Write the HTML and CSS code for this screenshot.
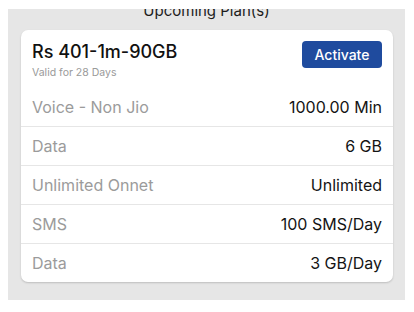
FILE: index.html
```html
<!DOCTYPE html>
<html>
<head>
<meta charset="utf-8">
<link rel="stylesheet" href="styles.css">
</head>
<body>
<div class="panel">
  <h2 class="panel-title">Upcoming Plan(s)</h2>
  <div class="card">
    <div class="card-head">
      <div class="plan">
        <div class="plan-name">Rs 401-1m-90GB</div>
        <div class="plan-valid">Valid for 28 Days</div>
      </div>
      <button class="btn">Activate</button>
    </div>
    <div class="row"><span class="label">Voice - Non Jio</span><span class="value">1000.00 Min</span></div>
    <div class="row"><span class="label">Data</span><span class="value">6 GB</span></div>
    <div class="row"><span class="label">Unlimited Onnet</span><span class="value">Unlimited</span></div>
    <div class="row"><span class="label">SMS</span><span class="value">100 SMS/Day</span></div>
    <div class="row"><span class="label">Data</span><span class="value">3 GB/Day</span></div>
  </div>
</div>
</body>
</html>
```

FILE: styles.css
```css
html, body {
  margin: 0;
  padding: 0;
  background: #ffffff;
  font-family: Inter, "Liberation Sans", Arial, sans-serif;
}
.panel {
  margin: 9px 9px 0 8px;
  height: 291px;
  background: #e6e6e6;
  overflow: hidden;
}
.panel-title {
  margin: -7px 0 10px 0;
  font-size: 15px;
  line-height: 18px;
  font-weight: 400;
  color: #1c1c1c;
  text-align: center;
}
.card {
  margin: 0 12px 0 13px;
  background: #ffffff;
  border-radius: 7px;
  box-shadow: 0 1px 2px rgba(0, 0, 0, 0.18);
  overflow: hidden;
}
.card-head {
  display: flex;
  justify-content: space-between;
  align-items: flex-start;
  padding: 11px 11px 8px 11px;
}
.plan-name {
  font-size: 18px;
  line-height: 22px;
  font-weight: 500;
  color: #111;
}
.plan-valid {
  margin-top: 3px;
  font-size: 10.5px;
  line-height: 13px;
  color: #9a9a9a;
}
.btn {
  margin-top: 0;
  width: 80px;
  height: 27px;
  border: none;
  border-radius: 4px;
  background: #1f4b9e;
  color: #ffffff;
  font-family: inherit;
  font-size: 14px;
  font-weight: 500;
  padding: 0;
}
.row {
  display: flex;
  justify-content: space-between;
  align-items: center;
  height: 39px;
  padding: 0 11px;
  font-size: 16px;
}
.row + .row {
  border-top: 1px solid #e6e6e6;
  height: 38px;
}
.label {
  color: #9b9b9b;
}
.value {
  color: #141414;
}
```
